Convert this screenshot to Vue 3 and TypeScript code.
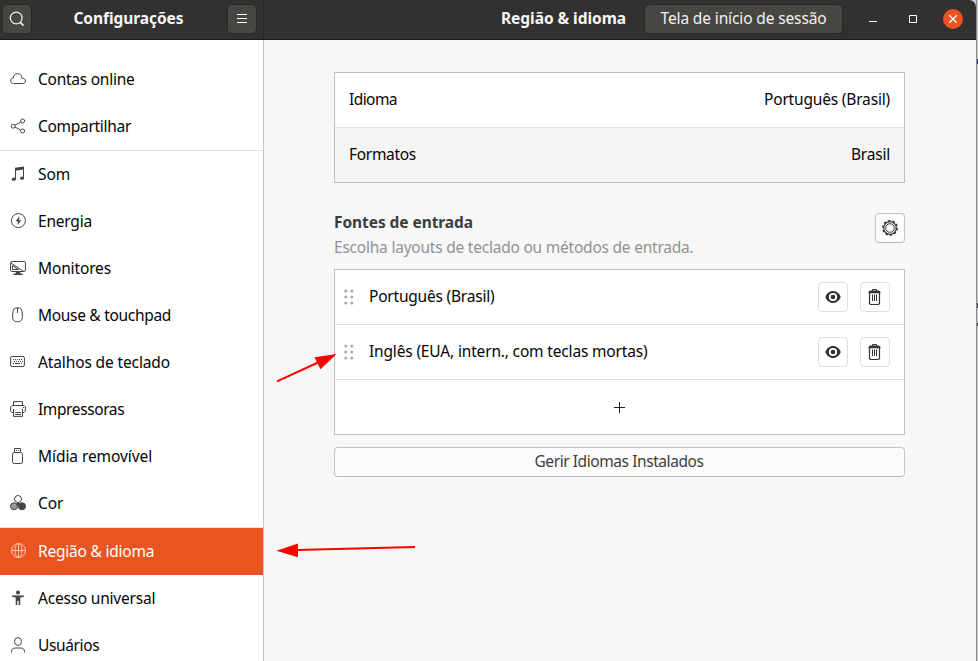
<script setup lang="ts">
interface Item {
  icon: string
  label: string
  width: number
  divided?: boolean
  active?: boolean
}

const items: Item[] = [
  { icon: 'cloud', label: 'Contas online', width: 96.5 },
  { icon: 'share', label: 'Compartilhar', width: 93, divided: true },
  { icon: 'music', label: 'Som', width: 32 },
  { icon: 'power', label: 'Energia', width: 54 },
  { icon: 'display', label: 'Monitores', width: 73 },
  { icon: 'mouse', label: 'Mouse & touchpad', width: 133 },
  { icon: 'keyboard', label: 'Atalhos de teclado', width: 132 },
  { icon: 'printer', label: 'Impressoras', width: 86.2 },
  { icon: 'usb', label: 'Mídia removível', width: 114.2 },
  { icon: 'color', label: 'Cor', width: 25.5, divided: true },
  { icon: 'globe', label: 'Região & idioma', width: 116.2, active: true },
  { icon: 'access', label: 'Acesso universal', width: 117.2 },
  { icon: 'user', label: 'Usuários', width: 61.2 },
]

const sources = [
  { label: 'Português (Brasil)', width: 125.5 },
  { label: 'Inglês (EUA, intern., com teclas mortas)', width: 278.5 },
]

// Tracks a label so that it spans the given number of pixels.
const vFit = {
  mounted(el: HTMLElement, binding: { value: number }) {
    const natural = el.getBoundingClientRect().width
    const count = (el.textContent ?? '').length
    el.style.letterSpacing = `${(binding.value - natural) / count}px`
  },
}
</script>

<template>
  <div class="desktop">
    <div class="window">
      <header class="bar">
        <div class="bar-side">
          <button class="dark-btn square">
            <svg width="16" height="16" viewBox="0 0 16 16" fill="none" stroke="#f2f2f2" stroke-width="1.2"><circle cx="7.2" cy="7" r="5.9" /><path d="M11.3 11.4l3.2 3.2" stroke-width="1.6" /></svg>
          </button>
          <span v-fit="110" class="title side-title">Configurações</span>
          <button class="dark-btn square">
            <svg width="16" height="16" viewBox="0 0 16 16" fill="none" stroke="#fff"><path d="M3 3.5h10M3 7.5h10M3 11.5h10" /></svg>
          </button>
        </div>
        <div class="bar-main">
          <span v-fit="125" class="title">Região &amp; idioma</span>
          <button class="dark-btn session"><span v-fit="166">Tela de início de sessão</span></button>
          <div class="controls">
            <svg width="16" height="16" viewBox="0 0 16 16"><path d="M4 10.5h8" stroke="#fff" /></svg>
            <svg width="16" height="16" viewBox="0 0 16 16"><path d="M4.5 4.5h7v7h-7z" stroke="#fff" fill="none" /></svg>
            <span class="close"><svg width="20" height="20" viewBox="0 0 20 20"><path d="M6.3 6.3l7.4 7.4M13.7 6.3l-7.4 7.4" stroke="#fff" stroke-width="1.3" /></svg></span>
          </div>
        </div>
      </header>

      <div class="body">
        <nav class="sidebar">
          <div v-for="item in items" :key="item.label" class="item" :class="{ divided: item.divided, active: item.active }">
            <svg class="icon" width="16" height="16" viewBox="0 0 16 16" fill="none" stroke="currentColor">
              <path v-if="item.icon === 'cloud'" d="M3.7 12.5C1.7 12.5.6 11.3.6 9.7c0-1.6 1.2-2.7 2.8-2.7C3.5 4.2 5 2.6 7.5 2.6c2.3 0 3.7 1.2 4.1 3.3l.4 1.3c2.2 0 3.4 1.1 3.4 2.8 0 1.5-1.1 2.5-2.8 2.5z" />
              <g v-else-if="item.icon === 'share'"><circle cx="3.2" cy="8.2" r="2" /><circle cx="12.6" cy="3" r="2" /><circle cx="12.6" cy="13" r="2" /><path d="M5 7.2l5.7-3.1M5 9.1l5.7 3" /></g>
              <g v-else-if="item.icon === 'music'"><path d="M5.5 13V2.8l8-1.3v10.8" /><path d="M5 1.8L14 .5v3L5 4.8z" fill="currentColor" stroke="none" /><ellipse cx="3.8" cy="13.2" rx="2" ry="1.6" fill="currentColor" stroke="none" /><ellipse cx="12" cy="12.2" rx="2" ry="1.6" fill="currentColor" stroke="none" /></g>
              <g v-else-if="item.icon === 'power'"><circle cx="8.4" cy="7.6" r="7" /><path d="M9.4 3L5.7 8.3h2.2L7.6 12.2l3.6-5H9.1z" fill="currentColor" stroke="none" /></g>
              <g v-else-if="item.icon === 'display'"><rect x=".6" y="1.5" width="14.8" height="10" rx="1.3" /><path d="M1 3l12.5 8.3M2.5 5.5v4h6z" /><path d="M5.8 12h4.4v1.4h2.3V15h-9v-1.6h2.3z" fill="currentColor" stroke="none" /></g>
              <path v-else-if="item.icon === 'mouse'" d="M7.5.8c3.3 0 4.1 1.2 4.5 4 .3 2.3.5 4.2.3 6-.3 2.5-1.9 4-4.8 4s-4.5-1.5-4.8-4c-.2-1.8 0-3.7.3-6 .4-2.8 1.2-4 4.500-4zM7.500 1v5" />
              <g v-else-if="item.icon === 'keyboard'"><rect x=".6" y="2.5" width="13.8" height="10" rx="1.5" /><path d="M3 5.500h10M4 7.500h9" stroke-dasharray="1 1" /><path d="M3 9.500h1m1 0h5m1 0h1" /></g>
              <g v-else-if="item.icon === 'printer'"><path d="M3.500 4V.600h9V4M3 11.500H2L.600 10V6L2 4.500h12L15.400 6v4L14 11.500h-1" /><path d="M3.500 8v7.400h9V8M5 11.500h6M5 13.500h6" /><path d="M13 6.500h1" /></g>
              <g v-else-if="item.icon === 'usb'"><rect x="2.5" y="4.5" width="10" height="11" rx="1.8" /><path d="M4.500 4V.500h6V4M6 2.500h1m1 0h1" /></g>
              <g v-else-if="item.icon === 'color'"><circle cx="8" cy="4" r="3.5" /><circle cx="4" cy="11.3" r="3.5" fill="#999" /><circle cx="12" cy="11.3" r="3.5" fill="currentColor" /><circle cx="8" cy="9" r="1.5" fill="currentColor" stroke="none" /></g>
              <g v-else-if="item.icon === 'globe'"><circle cx="8.5" cy="7.5" r="7" /><ellipse cx="8.5" cy="7.5" rx="3.5" ry="7" /><path d="M8.500.5v14M1.500 7.500h14" /></g>
              <g v-else-if="item.icon === 'access'" fill="currentColor" stroke="none"><circle cx="8" cy="2.5" r="2" /><path d="M2 5.500h12v1.300l-3.700.7v7.500H8.700V11H7.300v4H5.700V7.500L2 6.800z" /></g>
              <g v-else><ellipse cx="8" cy="4.5" rx="3.5" ry="4" /><path d="M1.500 15.500v-1c0-2.300 1.500-3.500 4-3.500h5c2.500 0 4 1.200 4 3.500v1" /></g>
            </svg>
            <span v-fit="item.width">{{ item.label }}</span>
          </div>
        </nav>

        <main class="content">
          <section class="card">
            <div class="row"><span v-fit="48">Idioma</span><span v-fit="126">Português (Brasil)</span></div>
            <div class="row shaded"><span v-fit="67">Formatos</span><span v-fit="39">Brasil</span></div>
          </section>

          <div class="heading">
            <div class="heading-text">
              <h2><span v-fit="139">Fontes de entrada</span></h2>
              <p><span v-fit="359.5">Escolha layouts de teclado ou métodos de entrada.</span></p>
            </div>
            <button class="light-btn gear">
              <svg width="18" height="18" viewBox="0 0 18 18" fill="none" stroke="#3b3b3b"><circle cx="9" cy="9" r="7.2" stroke-width="1.5" stroke-dasharray="2.5 2.02" /><circle cx="9" cy="9" r="6.3" stroke-width="1.2" /><circle cx="9" cy="9" r="4.3" /></svg>
            </button>
          </div>

          <section class="card sources">
            <div v-for="source in sources" :key="source.label" class="row">
              <svg class="grip" width="10" height="16" viewBox="0 0 10 16" fill="#aaa"><circle cx="1.8" cy="2" r="1.6" /><circle cx="7.8" cy="2" r="1.6" /><circle cx="1.8" cy="8" r="1.6" /><circle cx="7.8" cy="8" r="1.6" /><circle cx="1.8" cy="14" r="1.6" /><circle cx="7.8" cy="14" r="1.6" /></svg>
              <span class="source-name"><span v-fit="source.width">{{ source.label }}</span></span>
              <button class="light-btn faint">
                <svg width="16" height="16" viewBox="0 0 16 16"><path d="M8 2C4.500 2 1.500 4.500.3 8c1.200 3.500 4.200 6 7.700 6s6.500-2.500 7.700-6C14.500 4.500 11.500 2 8 2z" fill="#333" /><circle cx="8" cy="8" r="3.2" fill="#333" stroke="#fff" stroke-width="1.8" /><circle cx="8" cy="8" r="1.9" fill="#333" /></svg>
              </button>
              <button class="light-btn faint">
                <svg width="16" height="18" viewBox="0 0 16 18" fill="none" stroke="#333"><path d="M5.500 3V1.500h4V3" /><path d="M1.500 5.200V4L3 2.500h9L13.500 4v1.200z" fill="#333" stroke="none" /><path d="M2.500 5v10.500l1 1h8l1-1V5" stroke-width="1.2" /><path d="M5.500 6.500v6.500M7.500 6.500v6.500M9.500 6.500v6.500" /></svg>
              </button>
            </div>
            <div class="row add">
              <svg width="12" height="12" viewBox="0 0 12 12"><path d="M0 6.500h11M5.500 1v11" stroke="#222" /></svg>
            </div>
          </section>

          <button class="light-btn manage"><span v-fit="170">Gerir Idiomas Instalados</span></button>
        </main>
      </div>
    </div>
    <div class="backdrop"><i class="mark blue"></i><i class="mark dark"></i><i class="mark dark short"></i></div>

    <svg class="arrows" width="978" height="661" viewBox="0 0 978 661" fill="#f00" stroke="#f00">
      <path d="M277 381.300L318 362.500M415 547L297 550" stroke-width="2" />
      <path d="M336.500 354L314.500 357.300L320.500 369.300zM276.500 550.700L298 543.500v13.800z" stroke="none" />
    </svg>
  </div>
</template>

<style>
body { margin: 0; overflow: hidden; background: #c9c9c9; }
</style>

<style scoped>
.desktop { position: relative; display: flex; width: 978px; height: 661px; overflow: hidden; font: 15.5px/22px "Noto Sans", "Open Sans", sans-serif; color: #050505; }
span, h2, p { white-space: nowrap; }
button { box-sizing: border-box; display: flex; align-items: center; justify-content: center; padding: 0; font: inherit; }
.window { display: flex; flex-direction: column; width: 976px; background: #f7f7f7; border-radius: 0 7px 0 0; overflow: hidden; }
.bar { box-sizing: border-box; flex: none; display: flex; height: 40px; background: #323030; border-bottom: 1px solid #1b1a1a; color: #f7f7f7; }
.bar-side { box-sizing: border-box; display: flex; justify-content: space-between; width: 264px; padding: 5px 7px 0 3px; border-right: 1px solid #272525; }
.title { font-weight: 700; line-height: 27px; }
.side-title { margin-right: 2px; }
.dark-btn { height: 28px; border: 0; border-radius: 4px; background: #484643; color: #f2f2f2; box-shadow: 0 0 0 1px #292727; }
.square { width: 28px; }
.bar-main { display: flex; flex: 1; justify-content: flex-end; padding: 5px 13px 0 0; }
.session { width: 197px; margin-left: 19px; }
.session span { line-height: 26px; padding-bottom: 2px; }
.controls { display: flex; align-items: center; height: 28px; gap: 24px; margin-left: 23px; }
.controls .close { margin-left: -2px; width: 20px; height: 20px; border-radius: 50%; background: #e95420; }
.close svg { display: block; }
.body { display: flex; flex: 1; min-height: 0; }
.sidebar { box-sizing: border-box; width: 264px; flex: none; padding-top: 16px; background: #fff; border-right: 1px solid #c6c6c6; overflow: hidden; }
.item { box-sizing: border-box; display: flex; align-items: center; height: 47px; padding: 0 0 2px 10px; gap: 12px; }
.item.divided { height: 48px; border-bottom: 1px solid #e1e1e1; }
.icon { flex: none; color: #444; }
.item.active { background: #e95420; color: #fff; }
.item.active .icon { color: #ffc3ab; }
.content { box-sizing: border-box; width: 641px; padding: 32px 0 0 70px; }
.card { background: #fff; border: 1px solid #bfbfbf; }
.row { display: flex; box-sizing: border-box; height: 55px; align-items: center; justify-content: space-between; padding: 0 14px; border-bottom: 1px solid #e1e1e1; }
.row:last-child { height: 54px; border-bottom: 0; }
.row > span { padding-bottom: 2px; }
.row.shaded { background: #f4f4f4; }
.heading { display: flex; justify-content: space-between; height: 86px; box-sizing: border-box; padding-top: 27px; }
h2, p { margin: 0; font-size: inherit; line-height: 25px; }
h2 { color: #3d3d3d; }
p { color: #929292; }
.light-btn { width: 30px; height: 30px; border: 1px solid #c4c4c4; border-bottom-color: #b8b8b8; border-radius: 4px; background: #fcfcfc; color: #3d3d3d; }
.gear { margin-top: 3px; }
.faint { border-color: #dedede; background: #fff; }
.sources .row { padding-left: 9px; }
.grip { margin-bottom: 1px; }
.source-name { flex: 1; margin-left: 15px; }
.faint + .faint { margin-left: 12px; }
.sources .add { justify-content: center; padding: 0; }
.manage { width: 571px; margin-top: 12px; }
.manage span { padding: 0 1px 2px 0; }
.backdrop { flex: 1; background: #c9c9c9; border-left: 1px solid #8d8d8d; }
.mark { display: block; height: 5px; }
.blue { margin-top: 59px; background: #303080; }
.dark { margin-top: 239px; background: #404448; }
.short { margin-top: 15px; height: 3px; }
.arrows { position: absolute; inset: 0; pointer-events: none; }
</style>
